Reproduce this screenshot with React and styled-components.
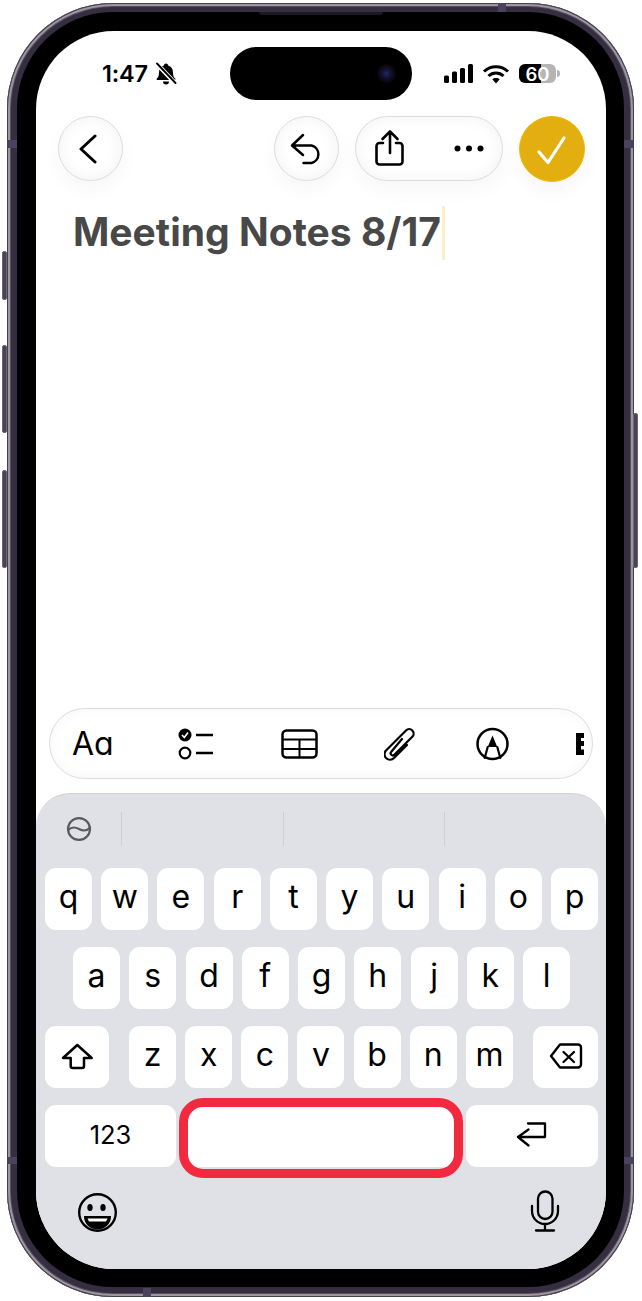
import React from 'react';
import styled, { createGlobalStyle } from 'styled-components';

const Global = createGlobalStyle`
  html, body { margin: 0; padding: 0; background: #fff; }
  body { font-family: Inter, "Liberation Sans", sans-serif; color: #000; }
  * { box-sizing: border-box; }
`;

const Page = styled.div`
  width: 642px;
  height: 1301px;
  padding: 3px 8px 4px 7px;
  overflow: hidden;
  background: #fff;
`;

const Phone = styled.div`
  position: relative;
  width: 627px;
  height: 1294px;
  padding: 9px 10px 10px 10px;
  border-radius: 106px;
  background: #352d40;
  box-shadow: inset 0 0 0 1px #453e50, inset 0 0 0 3px #9d979d, inset 0 0 0 4px #575062;
`;

const SideButton = styled.div`
  position: absolute;
  top: ${p => p.$top}px;
  height: ${p => p.$h}px;
  width: 5px;
  ${p => (p.$right ? 'right: -4px;' : 'left: -5px;')}
  background: #4a4258;
  border: 1px solid #6c6674;
  border-radius: 2px;
`;

const Band = styled.div`
  position: absolute;
  background: #4a4360;
  ${p => p.$pos}
`;

const Speaker = styled.div`
  position: absolute;
  left: 252px;
  top: 9px;
  width: 124px;
  height: 3px;
  border-radius: 0 0 3px 3px;
  background: #1c1922;
`;

const Bezel = styled.div`
  height: 100%;
  padding: 19px 18px 18px 19px;
  border-radius: 96px;
  background: #000;
`;

const Screen = styled.div`
  position: relative;
  height: 100%;
  display: flex;
  flex-direction: column;
  overflow: hidden;
  border-radius: 78px;
  background: #fff;
`;

const Island = styled.div`
  position: absolute;
  left: 194px;
  top: 16px;
  width: 182px;
  height: 53px;
  border-radius: 27px;
  background: #000;
`;

const Lens = styled.div`
  position: absolute;
  left: 147px;
  top: 17px;
  width: 19px;
  height: 19px;
  border-radius: 50%;
  background: radial-gradient(circle, #23266b 0, #12132f 32%, #08080f 62%, #000 100%);
`;

const StatusBar = styled.div`
  height: 85px;
  padding: 0 46px 0 66px;
  display: flex;
  align-items: center;
  justify-content: space-between;
  flex-shrink: 0;
`;

const StatusLeft = styled.div`
  display: flex;
  align-items: center;
  gap: 7px;
`;

const StatusRight = styled.div`
  display: flex;
  align-items: center;
  gap: 9px;
`;

const Time = styled.span`
  font-size: 23.5px;
  font-weight: 600;
  line-height: 28px;
  letter-spacing: -0.2px;
`;

const BatteryWrap = styled.div`
  display: flex;
  align-items: center;
  gap: 1px;
`;

const Battery = styled.div`
  width: 37px;
  height: 19px;
  border-radius: 6px;
  display: flex;
  align-items: center;
  justify-content: center;
  background: linear-gradient(90deg, #000 60%, #b5b5b5 60%);
  color: #fff;
  font-size: 18.5px;
  font-weight: 600;
`;

const BatteryCap = styled.div`
  width: 3px;
  height: 7px;
  border-radius: 0 3px 3px 0;
  background: #b5b5b5;
`;

const NavRow = styled.div`
  height: 65px;
  padding: 0 21px 0 22px;
  display: flex;
  justify-content: space-between;
  flex-shrink: 0;
`;

const NavGroup = styled.div`
  display: flex;
  gap: 16px;
`;

const glass = `
  background: #fff;
  border: 1px solid #dcdcdc;
  box-shadow: inset 0 0 16px rgba(0, 0, 0, 0.055), 0 9px 20px rgba(0, 0, 0, 0.035);
`;

const RoundButton = styled.div`
  ${glass}
  width: 65px;
  height: 65px;
  border-radius: 50%;
  display: flex;
  align-items: center;
  justify-content: center;
`;

const PillButton = styled.div`
  ${glass}
  width: 148px;
  height: 65px;
  padding: 0 17px 0 18px;
  border-radius: 33px;
  display: flex;
  align-items: center;
  justify-content: space-between;
`;

const DoneButton = styled.div`
  width: 66px;
  height: 66px;
  border-radius: 50%;
  display: flex;
  align-items: center;
  justify-content: center;
  background: #e2ae10;
  border: 1px solid #f0b90b;
  box-shadow: 0 9px 20px rgba(0, 0, 0, 0.04);
`;

const TitleRow = styled.div`
  margin-top: 25px;
  padding-left: 37px;
  height: 54px;
  display: flex;
  align-items: center;
  flex-shrink: 0;
`;

const Title = styled.h1`
  margin: 0 0 3px;
  font-size: 39px;
  font-weight: 700;
  line-height: 51px;
  letter-spacing: 0.02px;
  color: #484848;
  white-space: nowrap;
`;

const Caret = styled.div`
  width: 3px;
  height: 54px;
  margin-left: 1px;
  background: #fbeec8;
`;

const Spacer = styled.div`
  flex: 1;
`;

const Toolbar = styled.div`
  ${glass}
  margin: 0 13px 14px;
  height: 71px;
  padding: 0 8px 0 22px;
  border-radius: 36px;
  display: flex;
  align-items: center;
  flex-shrink: 0;
  box-shadow: inset 0 0 14px rgba(0, 0, 0, 0.04);
`;

const ToolScroller = styled.div`
  flex: 1;
  min-width: 0;
  display: flex;
  align-items: center;
  gap: 66px;
  overflow: hidden;
  svg { flex-shrink: 0; }
`;

const FontLabel = styled.span`
  width: 40px;
  flex-shrink: 0;
  font-size: 32px;
  line-height: 40px;
  white-space: nowrap;
`;

const MarkupIcon = styled.svg`
  margin-left: -5px;
`;

const Keyboard = styled.div`
  height: 476px;
  flex-shrink: 0;
  display: flex;
  flex-direction: column;
  border-top: 1px solid #d2d2d6;
  border-radius: 34px 34px 0 0;
  background: #e0e1e7;
`;

const SuggestBar = styled.div`
  height: 74px;
  padding-top: 18px;
  display: flex;
  align-items: flex-start;
  flex-shrink: 0;
`;

const GlobeSlot = styled.div`
  width: 85px;
  height: 34px;
  padding-left: 30px;
  display: flex;
  align-items: center;
`;

const SuggestSlot = styled.div`
  width: 161.5px;
  height: 34px;
  border-left: 1px solid #cdced4;
`;

const KeyRows = styled.div`
  padding: 0 8px 0 9px;
  display: flex;
  flex-direction: column;
  gap: 17px;
`;

const KeyRow = styled.div`
  height: 62px;
  display: flex;
  justify-content: space-between;
  padding: 0 ${p => p.$inset || 0}px;
  gap: ${p => p.$gap || 0}px;
`;

const LetterGroup = styled.div`
  flex: 1;
  display: flex;
  justify-content: space-between;
  margin: 0 20px;
`;

const Key = styled.div`
  position: relative;
  flex: ${p => (p.$grow ? '1' : '0 0 auto')};
  width: ${p => (p.$grow ? 'auto' : `${p.$w || 47}px`)};
  height: 62px;
  padding-bottom: ${p => (p.$label ? 2 : 5)}px;
  border-radius: 11px;
  display: flex;
  align-items: center;
  justify-content: center;
  background: #fff;
  font-size: ${p => (p.$label ? 25.5 : 32)}px;
  line-height: 40px;
`;

const Highlight = styled.div`
  position: absolute;
  left: -6px;
  right: -6px;
  top: -7px;
  bottom: -11px;
  border: 9px solid #f22a3f;
  border-radius: 24px;
`;

const BottomRow = styled.div`
  margin-top: 22px;
  padding: 0 46px 0 42px;
  display: flex;
  align-items: center;
  justify-content: space-between;
`;

const ink = { fill: 'none', stroke: '#000', strokeLinecap: 'round', strokeLinejoin: 'round' };

const BellOff = () => (
  <svg viewBox="156 63 22 23" width="22" height="23">
    <path d="M167 64.5c-1.2 0-2 .8-2.1 1.9-3.2.9-4.9 3.6-4.9 7 0 3.2-.6 4.6-2.2 6.2-.6.6-.2 1.4.6 1.4h17.2c.8 0 1.2-.8.6-1.4-1.6-1.6-2.2-3-2.2-6.2 0-3.4-1.7-6.100-4.900-7-.1-1.100-.9-1.900-2.100-1.900z" fill="#000" />
    <path d="M164 82.500a3 3 0 0 0 6 0z" fill="#000" />
    <path d="M158 65l18 19" stroke="#fff" strokeWidth="4.400" fill="none" />
    <path d="M158 64.500l18.500 19.500" stroke="#000" strokeWidth="1.900" strokeLinecap="round" fill="none" />
  </svg>
);

const Signal = () => (
  <svg viewBox="445 63 29 19" width="29" height="19">
    <rect x="445" y="74.500" width="5" height="7.500" rx="1.500" />
    <rect x="453" y="70.500" width="5" height="11.500" rx="1.500" />
    <rect x="461" y="67" width="5" height="15" rx="1.500" />
    <rect x="469" y="63" width="5" height="19" rx="1.500" />
  </svg>
);

const Wifi = () => (
  <svg viewBox="482 63 28 20" width="28" height="20">
    <path d="M484 70.500c6.800-6.400 17.200-6.400 24 0" {...ink} strokeWidth="3" strokeLinecap="butt" />
    <path d="M488.500 75c4.300-4 10.700-4 15 0" {...ink} strokeWidth="3" strokeLinecap="butt" />
    <path d="M492.300 78.300c2-1.800 5.400-1.800 7.400 0L496 82.500z" fill="#000" />
  </svg>
);

const App = () => (
  <>
    <Global />
    <Page>
      <Phone>
        <SideButton $top={248} $h={49} />
        <SideButton $top={342} $h={88} />
        <SideButton $top={467} $h={98} />
        <SideButton $right $top={410} $h={155} />
        <Band $pos="left: 0; top: 137px; width: 10px; height: 8px;" />
        <Band $pos="right: 0; top: 137px; width: 10px; height: 8px;" />
        <Band $pos="left: 0; bottom: 133px; width: 10px; height: 7px;" />
        <Band $pos="right: 0; bottom: 133px; width: 10px; height: 7px;" />
        <Band $pos="left: 491px; top: 0; width: 8px; height: 9px;" />
        <Band $pos="left: 136px; bottom: 0; width: 8px; height: 9px;" />
        <Bezel>
          <Screen>
            <Island>
              <Lens />
            </Island>
            <StatusBar>
              <StatusLeft>
                <Time>1:47</Time>
                <BellOff />
              </StatusLeft>
              <StatusRight>
                <Signal />
                <Wifi />
                <BatteryWrap>
                  <Battery>60</Battery>
                  <BatteryCap />
                </BatteryWrap>
              </StatusRight>
            </StatusBar>

            <NavRow>
              <RoundButton>
                <svg viewBox="78 133 25 31" width="25" height="31">
                  <path d="M95 136l-14 13 14 13" {...ink} strokeWidth="3" />
                </svg>
              </RoundButton>
              <NavGroup>
                <RoundButton>
                  <svg viewBox="289 132 35 33" width="35" height="33">
                    <path d="M303 135l-11 10.500 11 9.500M292.500 145.500h19a9 9 0 0 1 0 17.500h-8" {...ink} strokeWidth="2.500" />
                  </svg>
                </RoundButton>
                <PillButton>
                  <svg viewBox="374 129 32 39" width="32" height="39">
                    <path d="M383 143h-3.500a3 3 0 0 0-3 3v15.500a3 3 0 0 0 3 3h20a3 3 0 0 0 3-3V146a3 3 0 0 0-3-3H396" {...ink} strokeWidth="2.600" />
                    <path d="M390 153v-21.500M382.500 139l7.500-7.500 7.500 7.500" {...ink} strokeWidth="2.600" />
                  </svg>
                  <svg viewBox="453 143 32 11" width="32" height="11">
                    <circle cx="457.500" cy="148.500" r="3" />
                    <circle cx="469" cy="148.500" r="3" />
                    <circle cx="480.500" cy="148.500" r="3" />
                  </svg>
                </PillButton>
                <DoneButton>
                  <svg viewBox="535 133 34 31" width="34" height="31">
                    <path d="M539 151l9 10.500L564 137" fill="none" stroke="#fff" strokeWidth="3.200" strokeLinecap="round" strokeLinejoin="round" />
                  </svg>
                </DoneButton>
              </NavGroup>
            </NavRow>

            <TitleRow>
              <Title>Meeting Notes 8/17</Title>
              <Caret />
            </TitleRow>

            <Spacer />

            <Toolbar>
              <ToolScroller>
                <FontLabel>Aɑ</FontLabel>
                <svg viewBox="178 726 37 34" width="37" height="34">
                  <circle cx="185" cy="734" r="6.500" fill="#000" />
                  <path d="M182 734l2.300 2.500 3.700-5" fill="none" stroke="#fff" strokeWidth="1.600" />
                  <circle cx="185" cy="752" r="5.300" fill="none" stroke="#000" strokeWidth="2.200" />
                  <path d="M196 734h17M196 752h17" {...ink} strokeWidth="2.500" strokeLinecap="butt" />
                </svg>
                <svg viewBox="281 726 37 34" width="37" height="34">
                  <rect x="282.500" y="729.500" width="34" height="27" rx="4" {...ink} strokeWidth="2.500" />
                  <path d="M282.500 738.500h34M282.500 748h34M299.500 738.500v18" {...ink} strokeWidth="2" strokeLinecap="butt" />
                </svg>
                <svg viewBox="384 726 31 34" width="31" height="34">
                  <path d="M407 744l-13 13a5.300 5.300 0 0 1-8-7.500l20-20a4.400 4.400 0 0 1 6.300 6.300l-18 18a2 2 0 0 1-3-3L402 738" {...ink} strokeWidth="2.200" />
                </svg>
                <MarkupIcon viewBox="476 726 33 34" width="33" height="34">
                  <circle cx="492.500" cy="743" r="15" {...ink} strokeWidth="2.500" />
                  <path d="M492.500 734.500l-4.800 11.500h9.600z" fill="#000" />
                  <path d="M487.700 746l-3 11M497.300 746l3 11" {...ink} strokeWidth="2.200" />
                </MarkupIcon>
                <svg viewBox="575 726 20 34" width="20" height="34">
                  <path d="M576 732h14v5h-9v3h9v5h-9v3.500h9v5.500h-14z" fill="#000" />
                </svg>
              </ToolScroller>
            </Toolbar>

            <Keyboard>
              <SuggestBar>
                <GlobeSlot>
                  <svg viewBox="65 815 28 28" width="26" height="26">
                    <circle cx="79" cy="829" r="11.800" fill="none" stroke="#5a5a5a" strokeWidth="2.400" />
                    <path d="M67.500 830c3.500-3.500 7-3.500 11.500-1s8 2.500 11.500-1" fill="none" stroke="#5a5a5a" strokeWidth="2.200" />
                  </svg>
                </GlobeSlot>
                <SuggestSlot />
                <SuggestSlot />
                <SuggestSlot />
              </SuggestBar>

              <KeyRows>
                <KeyRow>
                  {'qwertyuiop'.split('').map(c => <Key key={c}>{c}</Key>)}
                </KeyRow>
                <KeyRow $inset={28}>
                  {'asdfghjkl'.split('').map(c => <Key key={c}>{c}</Key>)}
                </KeyRow>
                <KeyRow>
                  <Key $w={64} $label>
                    <svg viewBox="61 1044 33 27" width="33" height="27">
                      <path d="M77.300 1046L63 1059h7.700v8a2 2 0 0 0 2 2h9.300a2 2 0 0 0 2-2v-8h7.700z" {...ink} strokeWidth="2.500" />
                    </svg>
                  </Key>
                  <LetterGroup>
                    {'zxcvbnm'.split('').map(c => <Key key={c}>{c}</Key>)}
                  </LetterGroup>
                  <Key $w={65} $label>
                    <svg viewBox="548 1044 34 27" width="34" height="27">
                      <path d="M559 1046.500h18a3 3 0 0 1 3 3v17a3 3 0 0 1-3 3h-18l-9-11.500z" transform="translate(0 -1)" {...ink} strokeWidth="2.400" />
                      <path d="M562.500 1053l10.500 10M573 1053l-10.500 10" {...ink} strokeWidth="2.300" />
                    </svg>
                  </Key>
                </KeyRow>
                <KeyRow $gap={9}>
                  <Key $w={131} $label>123</Key>
                  <Key $grow $label>
                    <Highlight />
                  </Key>
                  <Key $w={132} $label>
                    <svg viewBox="517 1121 32 28" width="32" height="28">
                      <path d="M529 1123.500h17v13.500h-27M529.500 1129.500l-10.500 7.500 10.500 8.500" {...ink} strokeWidth="2.300" />
                    </svg>
                  </Key>
                </KeyRow>
              </KeyRows>

              <BottomRow>
                <svg viewBox="78 1192 39 39" width="39" height="39">
                  <circle cx="97.500" cy="1211.500" r="18.300" {...ink} strokeWidth="2.400" />
                  <ellipse cx="90" cy="1206.500" rx="2.700" ry="3.500" />
                  <ellipse cx="103" cy="1206.500" rx="2.700" ry="3.500" />
                  <path d="M84 1215h27c0 8-6 13.500-13.500 13.500S84 1223 84 1215z" fill="#000" />
                  <path d="M87.500 1217.500h20l-1.500 3h-17z" fill="#fff" />
                </svg>
                <svg viewBox="530 1188 30 47" width="30" height="47">
                  <rect x="538" y="1190.500" width="14.500" height="27.500" rx="7.250" {...ink} strokeWidth="2.300" />
                  <path d="M532 1205v5a13 13 0 0 0 26 0v-5M545 1223v6M536 1229.500h18" {...ink} strokeWidth="2.300" />
                </svg>
              </BottomRow>
            </Keyboard>
          </Screen>
        </Bezel>
        <Speaker />
      </Phone>
    </Page>
  </>
);

export default App;
